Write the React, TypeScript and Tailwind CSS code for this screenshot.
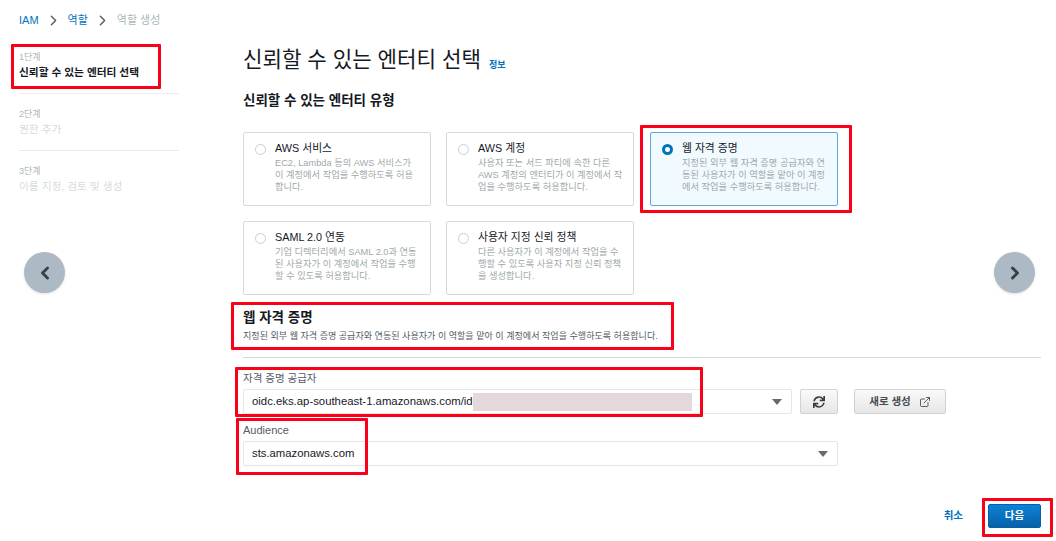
import { ChevronLeft, ChevronRight, ExternalLink } from "lucide-react";
import { FaSync } from "react-icons/fa";

const font = { fontFamily: '"Liberation Sans", "Noto Sans CJK KR", sans-serif' };

function Step({ step, label, active }: { step: string; label: string; active?: boolean }) {
  return (
    <div className="h-[57px] border-b border-[#eaeded] pt-[13px] last:border-b-0">
      <div className="text-[9px] leading-[14px] text-[#aab7b8]">{step}</div>
      <div className={active ? "whitespace-nowrap text-[10.7px] font-bold leading-[16px] text-[#16191f]" : "whitespace-nowrap text-[10.7px] leading-[16px] text-[#d5dbdb]"}>{label}</div>
    </div>
  );
}

function Card({ title, lines, selected }: { title: string; lines: string[]; selected?: boolean }) {
  return (
    <div className={selected ? "flex h-[74px] w-[188px] rounded-[2px] border border-[#5fa5df] bg-[#f1faff] pl-[11px] pt-[9px]" : "flex h-[74px] w-[188px] rounded-[2px] border border-[#d5dbdb] bg-white pl-[11px] pt-[9px]"}>
      {selected ? (
        <div className="mt-[2px] h-[11px] w-[11px] shrink-0 rounded-full border-[3.5px] border-[#0073bb] bg-white" />
      ) : (
        <div className="mt-[2px] h-[11px] w-[11px] shrink-0 rounded-full border border-[#c8cfd0] bg-white" />
      )}
      <div className="ml-[9px] flex-1">
        <div className="mb-[2px] text-[10.8px] leading-[13px] text-[#16191f]">{title}</div>
        {lines.map((l) => (
          <div key={l} className="whitespace-nowrap text-[9.25px] leading-[12px] text-[#a0a9aa]">{l}</div>
        ))}
      </div>
    </div>
  );
}

function Caret() {
  return <div className="h-0 w-0 border-x-[5.5px] border-t-[6px] border-x-transparent border-t-[#666b70]" />;
}

function RedBox({ className }: { className: string }) {
  return <div className={"pointer-events-none absolute rounded-[1px] border-[3.5px] border-[#fb0019] " + className} />;
}

export default function App() {
  return (
    <div className="relative h-[541px] w-[1056px] overflow-hidden bg-white" style={font}>
      <div className="flex h-full pl-[19px]">
        <aside className="w-[160px] shrink-0">
          <nav className="flex h-[37px] items-center pt-[3px] text-[11px]">
            <span className="text-[#0073bb]">IAM</span>
            <ChevronRight size={17} strokeWidth={2} className="mx-[6px] text-[#545b64]" />
            <span className="text-[#0073bb]">역할</span>
            <ChevronRight size={17} strokeWidth={2} className="mx-[6px] text-[#545b64]" />
            <span className="text-[#aab7b8]">역할 생성</span>
          </nav>
          <Step step="1단계" label="신뢰할 수 있는 엔터티 선택" active />
          <Step step="2단계" label="권한 추가" />
          <Step step="3단계" label="이름 지정, 검토 및 생성" />
        </aside>
        <main className="ml-[64px] flex-1 pr-[15px]">
          <div className="flex h-[76px] items-end pb-[2px]">
            <h1 className="text-[21.2px] leading-[28px] text-[#16191f]">신뢰할 수 있는 엔터티 선택</h1>
            <span className="mb-[2px] ml-[8px] text-[9px] font-bold text-[#0073bb]">정보</span>
          </div>
          <h2 className="mt-[15px] text-[13.5px] font-bold leading-[20px] text-[#16191f]">신뢰할 수 있는 엔터티 유형</h2>
          <div className="mt-[21px] grid grid-cols-[203px_204px_188px] gap-y-[15px]">
            <Card title="AWS 서비스" lines={["EC2, Lambda 등의 AWS 서비스가", "이 계정에서 작업을 수행하도록 허용", "합니다."]} />
            <Card title="AWS 계정" lines={["사용자 또는 서드 파티에 속한 다른", "AWS 계정의 엔터티가 이 계정에서 작", "업을 수행하도록 허용합니다."]} />
            <Card selected title="웹 자격 증명" lines={["지정된 외부 웹 자격 증명 공급자와 연", "동된 사용자가 이 역할을 맡아 이 계정", "에서 작업을 수행하도록 허용합니다."]} />
            <Card title="SAML 2.0 연동" lines={["기업 디렉터리에서 SAML 2.0과 연동", "된 사용자가 이 계정에서 작업을 수행", "할 수 있도록 허용합니다."]} />
            <Card title="사용자 지정 신뢰 정책" lines={["다른 사용자가 이 계정에서 작업을 수", "행할 수 있도록 사용자 지정 신뢰 정책", "을 생성합니다."]} />
          </div>
          <h2 className="mt-[14px] text-[13.5px] font-bold leading-[18px] text-[#16191f]">웹 자격 증명</h2>
          <p className="mt-[2px] whitespace-nowrap text-[9.06px] leading-[14px] text-[#545b64]">지정된 외부 웹 자격 증명 공급자와 연동된 사용자가 이 역할을 맡아 이 계정에서 작업을 수행하도록 허용합니다.</p>
          <div className="mt-[14px] border-t border-[#d5dbdb]" />
          <div className="mt-[13px] text-[10.5px] leading-[14px] text-[#545b64]">자격 증명 공급자</div>
          <div className="mt-[4px] flex items-center">
            <div className="flex h-[25px] w-[549px] items-center justify-between rounded-[2px] border border-[#e4e7e7] pl-[8px] pr-[9px]">
              <div className="flex items-center text-[11.35px] text-[#16191f]">
                <span>oidc.eks.ap-southeast-1.amazonaws.com/id</span>
                <div className="h-[18px] w-[219px] bg-[#e3d9da]" />
              </div>
              <Caret />
            </div>
            <button className="ml-[8px] flex h-[25px] w-[38px] items-center justify-center rounded-[2px] border border-[#cfd3d3] bg-gradient-to-b from-[#fafafa] to-[#e6e6e6] text-[#3d3d3d]">
              <FaSync size={12} />
            </button>
            <button className="ml-[16px] flex h-[25px] w-[92px] items-center justify-center gap-[8px] rounded-[2px] border border-[#cfd3d3] bg-gradient-to-b from-[#fafafa] to-[#e6e6e6] text-[10.5px] font-bold text-[#444b52]">
              새로 생성 <ExternalLink size={12} strokeWidth={1.75} />
            </button>
          </div>
          <div className="mt-[9px] text-[11px] leading-[14px] text-[#545b64]">Audience</div>
          <div className="mt-[4px] flex h-[25px] w-[595px] items-center justify-between rounded-[2px] border border-[#e4e7e7] pl-[8px] pr-[9px] text-[11.3px] text-[#16191f]">
            <span>sts.amazonaws.com</span>
            <Caret />
          </div>
          <div className="mt-[38px] flex items-center justify-end">
            <span className="mr-[25px] text-[10.5px] font-bold text-[#0073bb]">취소</span>
            <button className="h-[24px] w-[53px] rounded-[2px] border border-[#0a5ea3] bg-gradient-to-b from-[#0d82d6] to-[#0761a8] text-[10.5px] font-bold text-white">다음</button>
          </div>
        </main>
      </div>

      <button className="absolute left-[24px] top-[252px] flex h-[41px] w-[41px] items-center justify-center rounded-full bg-[#adb9c4] text-[#3c4043] shadow-sm">
        <ChevronLeft size={20} strokeWidth={3.5} />
      </button>
      <button className="absolute left-[994px] top-[252px] flex h-[41px] w-[41px] items-center justify-center rounded-full bg-[#adb9c4] text-[#3c4043] shadow-sm">
        <ChevronRight size={20} strokeWidth={3.5} />
      </button>

      <RedBox className="left-[11px] top-[44px] h-[45px] w-[150px]" />
      <RedBox className="left-[640px] top-[125px] h-[88px] w-[212px]" />
      <RedBox className="left-[231px] top-[302px] h-[48px] w-[443px]" />
      <RedBox className="left-[235px] top-[367px] h-[50px] w-[468px]" />
      <RedBox className="left-[236px] top-[418px] h-[57px] w-[132px]" />
      <RedBox className="left-[982px] top-[498px] h-[39px] w-[71px]" />
    </div>
  );
}
